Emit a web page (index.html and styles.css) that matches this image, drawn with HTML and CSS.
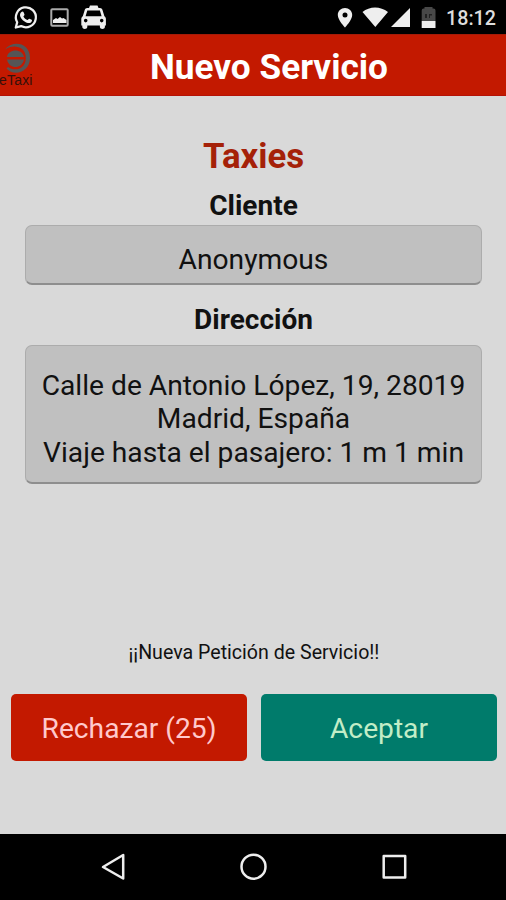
FILE: index.html
```html
<!DOCTYPE html>
<html lang="es">
<head>
<meta charset="utf-8">
<title>Nuevo Servicio</title>
<link rel="stylesheet" href="styles.css">
</head>
<body>
<div class="status">
  <svg class="status-left" width="110" height="34" viewBox="0 0 110 34">
    <path d="M15.800 27.500l1.400-5.200a10 10 0 1 1 3.900 3.800z" fill="none" stroke="#eee" stroke-width="2.300" stroke-linejoin="round"/>
    <path d="M21.200 12.200c.9-1 2-.8 2.400.1l.9 2.200c.2.6-.8 1.400-1.100 1.900.9 1.700 2.300 3 4.200 3.700.6-.5 1.200-1.700 1.800-1.400l2.300 1.100c.6.4.2 1.800-.5 2.400-1.700 1.500-4 1-6.600-.7-2.600-1.700-4.600-4.300-4.600-6.300 0-1.200.5-2.300 1.200-3z" fill="#eee"/>
    <rect x="51.300" y="9.300" width="16.400" height="16.400" rx="1" fill="none" stroke="#aaa" stroke-width="2"/>
    <path d="M53 23v-3l3-2 1.500 1 2.500-2 2 1.500 1.500-.5 3 2v3z" fill="#eee"/>
    <path fill="#eee" fill-rule="evenodd" d="M90 5.500h7.500l1 2.500h1.500c1.200 0 2 .8 2.400 1.800l2 6.400c1 .6 1.500 1.500 1.500 2.800V25.500h-1v1.500c0 2.600-5 2.600-5 0v-1.500H87.300V27c0 2.600-5 2.600-5 0v-1.500h-1V19c0-1.300.5-2.200 1.500-2.800l2-6.400C85.200 8.800 86 8 87.200 8H89zM87.300 10.500l-1.700 5.700h16L99.900 10.500zM85.700 18.800a1.800 1.800 0 1 0 0 3.600 1.800 1.800 0 0 0 0-3.600zm16 0a1.800 1.800 0 1 0 0 3.600 1.800 1.800 0 0 0 0-3.600z"/>
  </svg>
  <svg class="status-right" width="106" height="34" viewBox="335 0 106 34">
    <path fill="#eee" fill-rule="evenodd" d="M345 8c-4 0-7.200 3-7.200 7 0 5 7.200 12.500 7.200 12.500s7.200-7.500 7.200-12.500c0-4-3.200-7-7.200-7zm0 4.500a2.500 2.500 0 1 1 0 5 2.500 2.500 0 0 1 0-5z"/>
    <path fill="#eee" d="M362.500 12c7-6 18-6 25.500 0l-12.700 15zM391 27l19-19v19z"/>
    <path fill="#484848" d="M424.500 7h8v1.500h1q2 0 2 2V21h-13.800V10.500q0-2 2-2h.8z"/>
    <path fill="#222" d="M425 14h2v4h-2zm4 0h3v1.500h-2V18h-1z"/>
    <path fill="#eee" d="M421.700 21h13.800v7h-13.800z"/>
  </svg>
  <span class="clock">18:12</span>
</div>
<header class="header">
  <div class="logo">
    <svg width="33" height="31" viewBox="0 0 33 31">
      <path d="M5 6.500C12-3 30-1 30 15 30 29 14 34 6.500 25.500l1.500-1.500C15 29 25.800 26 25.800 15 25.800 3 13 1 5 6.500z" fill="#555"/>
      <path d="M7 14C8 5.500 22.500 5 24 14zM7 16.500H24C22 26.500 9 26.500 7 16.500z" fill="#555"/>
    </svg>
    <span class="brand">eTaxi</span>
  </div>
  <h1 class="title">Nuevo Servicio</h1>
</header>
<main class="main">
  <h2 class="company">Taxies</h2>
  <h3 class="label label-client">Cliente</h3>
  <div class="box box-client">Anonymous</div>
  <h3 class="label label-address">Dirección</h3>
  <div class="box box-address">
    <div class="line">Calle de Antonio López, 19, 28019</div>
    <div class="line">Madrid, España</div>
    <div class="line">Viaje hasta el pasajero: 1 m 1 min</div>
  </div>
  <p class="notice">¡¡Nueva Petición de Servicio!!</p>
  <div class="actions">
    <button class="btn reject">Rechazar (25)</button>
    <button class="btn accept">Aceptar</button>
  </div>
</main>
<nav class="nav">
  <svg width="506" height="66" viewBox="0 834 506 66" fill="none" stroke="#eee" stroke-width="2.500" stroke-linejoin="round">
    <path d="M123.200 855v23.500L103 867z"/>
    <circle cx="253.500" cy="866.700" r="12"/>
    <rect x="383.700" y="856" width="21.500" height="21.500"/>
  </svg>
</nav>
</body>
</html>
```

FILE: styles.css
```css
* { box-sizing: border-box; margin: 0; }
body {
  width: 506px;
  height: 900px;
  overflow: hidden;
  display: flex;
  flex-direction: column;
  background: #d9d9d9;
  color: #111;
  font-family: Roboto, sans-serif;
}
.status {
  height: 34px;
  display: flex;
  background: #000;
}
.status-right { margin-left: 225px; }
.clock {
  margin-left: 5px;
  color: #ddd;
  font-size: 19.700px;
  font-weight: 500;
  line-height: 37px;
}
.header {
  height: 62px;
  display: flex;
  background: #c31900;
  border-top: 1px solid #a51b08;
  border-bottom: 1px solid #b51206;
}
.logo {
  width: 33px;
  padding-top: 8px;
  display: flex;
  flex-direction: column;
}
.brand {
  margin: -1px 0 0 -1px;
  color: #35100a;
  font-family: "Liberation Sans", sans-serif;
  font-size: 14px;
  line-height: 14px;
  letter-spacing: 0.200px;
}
.title {
  margin-left: 117px;
  color: #fff;
  font-size: 35.200px;
  font-weight: 700;
  line-height: 64px;
  white-space: nowrap;
}
.main {
  height: 738px;
  display: flex;
  flex-direction: column;
}
.company {
  margin-top: 39px;
  padding-left: 1px;
  text-align: center;
  color: #a52108;
  font-size: 34.800px;
  font-weight: 700;
  line-height: 42px;
}
.label {
  padding-left: 1px;
  text-align: center;
  font-size: 28px;
  font-weight: 700;
  line-height: 34px;
}
.label-client { margin-top: 12px; }
.label-address { margin-top: 18px; }
.box {
  margin: 0 24px 0 25px;
  background: #c0c0c0;
  border: 1px solid #acacac;
  border-bottom: 2px solid #8e8e8e;
  border-radius: 7px;
  text-align: center;
  font-size: 28.200px;
}
.box-client {
  height: 60px;
  margin-top: 2px;
  line-height: 67px;
}
.box-address {
  height: 139px;
  margin-top: 8px;
  padding-top: 23px;
}
.line {
  line-height: 33.300px;
  white-space: nowrap;
}
.notice {
  margin-top: 157px;
  padding-left: 2px;
  text-align: center;
  font-size: 19.600px;
  line-height: 24px;
}
.actions {
  margin: 29px 9px 0 11px;
  display: grid;
  grid-template-columns: 1fr 1fr;
  gap: 14px;
}
.btn {
  height: 67px;
  padding: 2px 0 0;
  border: 0;
  border-radius: 5px;
  font-family: Roboto, sans-serif;
  font-size: 28.200px;
}
.reject { background: #c31900; color: #ffc9cc; }
.accept { background: #007b6b; color: #c2edc7; }
.nav {
  height: 66px;
  display: flex;
  background: #000;
}
```
